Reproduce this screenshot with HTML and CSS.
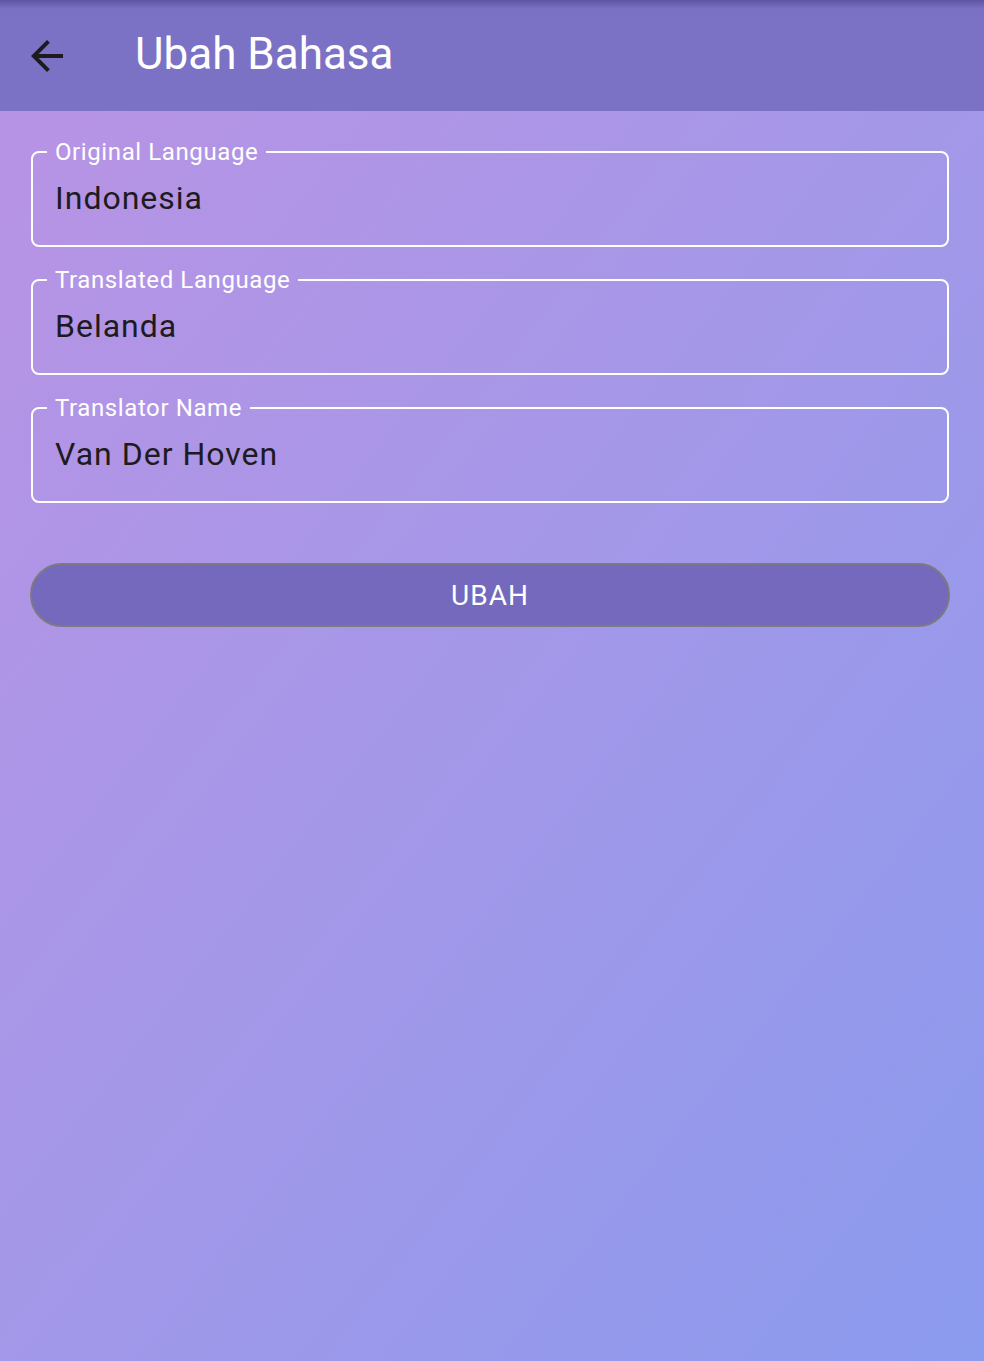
FILE: index.html
```html
<!DOCTYPE html>
<html lang="id">
<head>
<meta charset="utf-8">
<title>Ubah Bahasa</title>
<link rel="stylesheet" href="styles.css">
</head>
<body>
<div class="screen">
  <header class="appbar">
    <button class="back" aria-label="Kembali">
      <svg viewBox="0 0 24 24" width="48" height="48"><path d="M20 11H7.83l5.59-5.59L12 4l-8 8 8 8 1.41-1.41L7.83 13H20v-2z" fill="#1d1b20"/></svg>
    </button>
    <h1 class="title">Ubah Bahasa</h1>
  </header>
  <main class="content">
    <fieldset class="field">
      <legend class="label">Original Language</legend>
      <div class="value">Indonesia</div>
    </fieldset>
    <fieldset class="field">
      <legend class="label">Translated Language</legend>
      <div class="value">Belanda</div>
    </fieldset>
    <fieldset class="field">
      <legend class="label">Translator Name</legend>
      <div class="value">Van Der Hoven</div>
    </fieldset>
    <button class="submit">UBAH</button>
  </main>
</div>
</body>
</html>
```

FILE: styles.css
```css
* { box-sizing: border-box; }
html, body { margin: 0; padding: 0; }
body {
  font-family: Roboto, "Noto Sans", sans-serif;
  width: 984px;
  height: 1361px;
  overflow: hidden;
}
.screen {
  display: flex;
  flex-direction: column;
  height: 1361px;
}
.appbar {
  height: 111px;
  flex: none;
  display: flex;
  align-items: center;
  background: linear-gradient(to bottom, rgba(40,30,90,0.35) 0px, rgba(40,30,90,0) 9px), #7c72c5;
}
.back {
  width: 48px;
  height: 48px;
  margin-left: 23px;
  padding: 0;
  border: 0;
  background: none;
  display: flex;
}
.title {
  margin: 0 0 4px 64px;
  font-weight: 400;
  font-size: 44px;
  line-height: 56px;
  color: #ffffff;
}
.content {
  flex: 1;
  background: linear-gradient(to bottom right, #b893e5 0%, #a597e8 45%, #8b9bee 100%);
  padding: 27px 35px 0 31px;
  display: flex;
  flex-direction: column;
}
.field {
  margin: 0 0 19px 0;
  border: 2px solid #ffffff;
  border-radius: 8px;
  padding: 0 0 27px 14px;
  min-width: 0;
}
.label {
  padding: 0 8px;
  font-size: 24px;
  line-height: 28px;
  color: #ffffff;
  letter-spacing: 0.6px;
}
.value {
  margin-top: 12px;
  padding-left: 8px;
  font-size: 32px;
  line-height: 40px;
  letter-spacing: 1px;
  color: #1d1b20;
}
.submit {
  margin: 41px 0 0 -1px;
  width: 920px;
  height: 64px;
  border: 2px solid #7b7a82;
  border-radius: 32px;
  background: #7469bd;
  color: #ffffff;
  font-family: Roboto, sans-serif;
  font-size: 28px;
  font-weight: 400;
  letter-spacing: 1px;
  padding: 0;
}
```
